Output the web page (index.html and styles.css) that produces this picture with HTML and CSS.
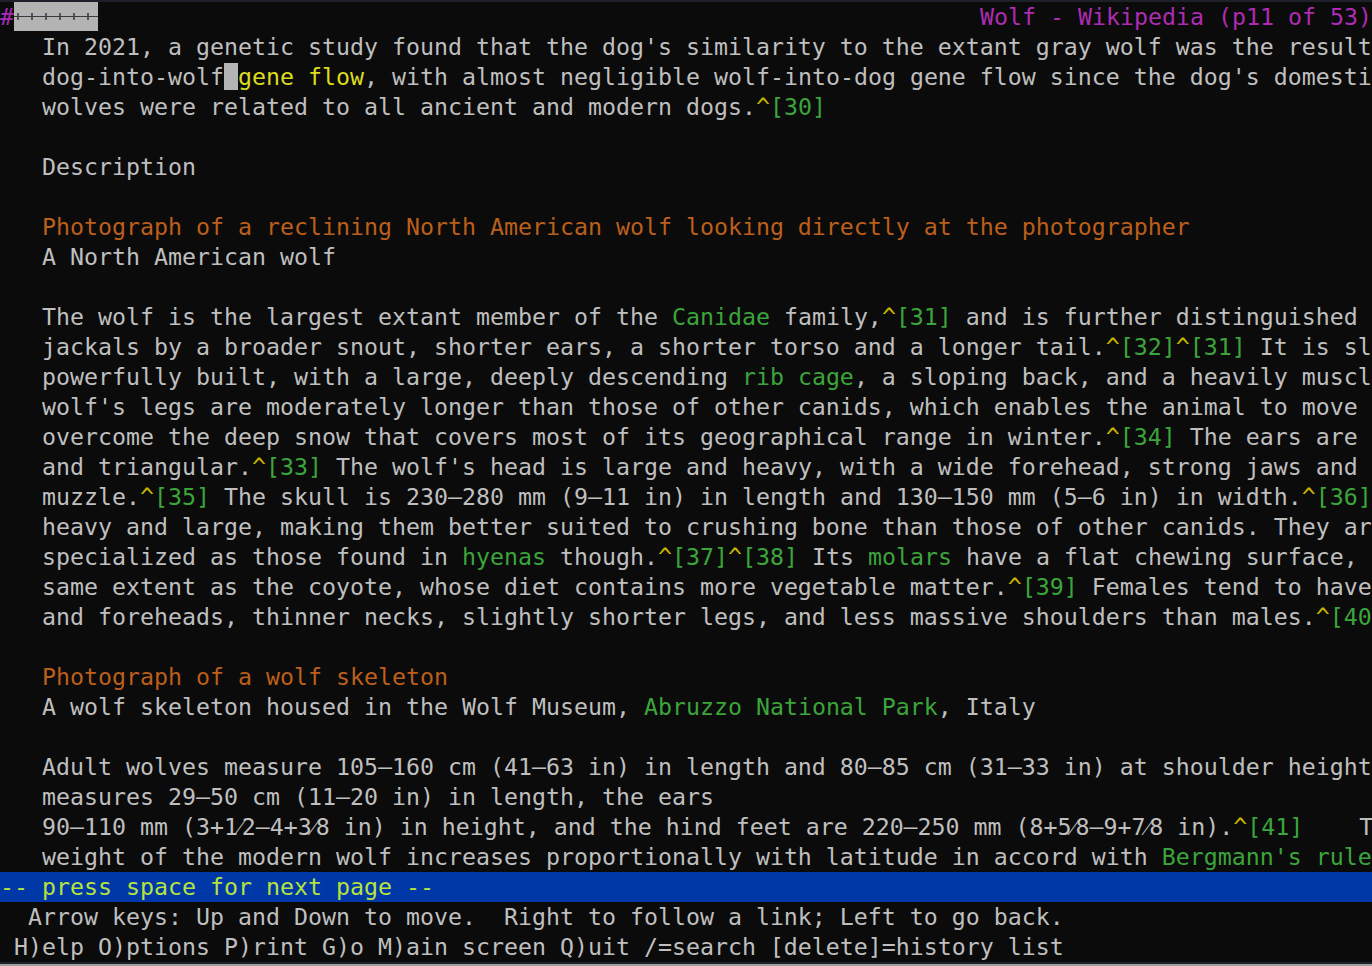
FILE: index.html
```html
<!DOCTYPE html>
<html>
<head>
<meta charset="utf-8">
<title>Wolf - Wikipedia</title>
<link rel="stylesheet" href="styles.css">
</head>
<body>
<div class="edge-top"></div>
<div class="term">
  <div class="row titlebar">
    <span class="hash">#</span><span class="selbox"><span class="ticks"></span></span>
    <span class="title">Wolf - Wikipedia (p11 of 53)</span>
  </div>
  <div class="page">
    <div class="row">In 2021, a genetic study found that the dog's similarity to the extant gray wolf was the result</div>
    <div class="row">dog-into-wolf<span class="cursor"> </span><span class="cur">gene flow</span>, with almost negligible wolf-into-dog gene flow since the dog's domesti</div>
    <div class="row">wolves were related to all ancient and modern dogs.<span class="up">^</span><span class="lk">[30]</span></div>
    <div class="row"> </div>
    <div class="row">Description</div>
    <div class="row"> </div>
    <div class="row alt">Photograph of a reclining North American wolf looking directly at the photographer</div>
    <div class="row">A North American wolf</div>
    <div class="row"> </div>
    <div class="row">The wolf is the largest extant member of the <span class="lk">Canidae</span> family,<span class="up">^</span><span class="lk">[31]</span> and is further distinguished</div>
    <div class="row">jackals by a broader snout, shorter ears, a shorter torso and a longer tail.<span class="up">^</span><span class="lk">[32]</span><span class="up">^</span><span class="lk">[31]</span> It is sl</div>
    <div class="row">powerfully built, with a large, deeply descending <span class="lk">rib cage</span>, a sloping back, and a heavily muscl</div>
    <div class="row">wolf's legs are moderately longer than those of other canids, which enables the animal to move</div>
    <div class="row">overcome the deep snow that covers most of its geographical range in winter.<span class="up">^</span><span class="lk">[34]</span> The ears are</div>
    <div class="row">and triangular.<span class="up">^</span><span class="lk">[33]</span> The wolf's head is large and heavy, with a wide forehead, strong jaws and</div>
    <div class="row">muzzle.<span class="up">^</span><span class="lk">[35]</span> The skull is 230–280 mm (9–11 in) in length and 130–150 mm (5–6 in) in width.<span class="up">^</span><span class="lk">[36]</span></div>
    <div class="row">heavy and large, making them better suited to crushing bone than those of other canids. They ar</div>
    <div class="row">specialized as those found in <span class="lk">hyenas</span> though.<span class="up">^</span><span class="lk">[37]</span><span class="up">^</span><span class="lk">[38]</span> Its <span class="lk">molars</span> have a flat chewing surface,</div>
    <div class="row">same extent as the coyote, whose diet contains more vegetable matter.<span class="up">^</span><span class="lk">[39]</span> Females tend to have</div>
    <div class="row">and foreheads, thinner necks, slightly shorter legs, and less massive shoulders than males.<span class="up">^</span><span class="lk">[40</span></div>
    <div class="row"> </div>
    <div class="row alt">Photograph of a wolf skeleton</div>
    <div class="row">A wolf skeleton housed in the Wolf Museum, <span class="lk">Abruzzo National Park</span>, Italy</div>
    <div class="row"> </div>
    <div class="row">Adult wolves measure 105–160 cm (41–63 in) in length and 80–85 cm (31–33 in) at shoulder height</div>
    <div class="row">measures 29–50 cm (11–20 in) in length, the ears</div>
    <div class="row">90–110 mm (3+1⁄2–4+3⁄8 in) in height, and the hind feet are 220–250 mm (8+5⁄8–9+7⁄8 in).<span class="up">^</span><span class="lk">[41]</span>    T</div>
    <div class="row">weight of the modern wolf increases proportionally with latitude in accord with <span class="lk">Bergmann's rule</span></div>
  </div>
  <div class="row statusbar">-- press space for next page --</div>
  <div class="row help1">Arrow keys: Up and Down to move.  Right to follow a link; Left to go back.</div>
  <div class="row help2">H)elp O)ptions P)rint G)o M)ain screen Q)uit /=search [delete]=history list</div>
</div>
<div class="edge-bottom"></div>
</body>
</html>
```
FILE: styles.css
```css
html, body {
  margin: 0;
  padding: 0;
  background: #0b0b0b;
  height: 966px;
  overflow: hidden;
}

.edge-top {
  height: 2px;
  background: #1d1f29;
}

.edge-bottom {
  height: 2px;
  background: #1d1f29;
  border-bottom: 2px solid #9c9c9c;
}

.term {
  width: 1372px;
  font-family: "DejaVu Sans Mono", monospace;
  font-size: 23.25px;
  line-height: 30px;
  color: #bfbfbf;
  overflow: hidden;
}

.row {
  height: 30px;
  white-space: pre;
  overflow: hidden;
}

.titlebar {
  display: flex;
  align-items: stretch;
}

.hash {
  width: 14px;
  color: #a52bb4;
}

.selbox {
  width: 84px;
  height: 29px;
  background: #b3b3b3;
  display: flex;
  align-items: center;
}

.ticks {
  display: block;
  width: 84px;
  height: 7px;
  background:
    linear-gradient(#3a3a3a, #3a3a3a) 0 50% / 100% 1px no-repeat,
    linear-gradient(90deg, transparent 2px, #4f5566 2px, #4f5566 4px, transparent 4px) 1px 0 / 14px 7px repeat-x;
}

.title {
  margin-left: auto;
  color: #ae2bb2;
}

.page {
  padding-left: 42px;
}

.alt {
  color: #bb5f1b;
}

.lk {
  color: #3ba53b;
}

.up {
  color: #c8b400;
}

.cur {
  color: #dcdc1e;
}

.cursor {
  background: #b4b4b4;
}

.statusbar {
  background: #0038a8;
  color: #b6e23e;
}

.help1 {
  padding-left: 28px;
}

.help2 {
  padding-left: 14px;
}
```
